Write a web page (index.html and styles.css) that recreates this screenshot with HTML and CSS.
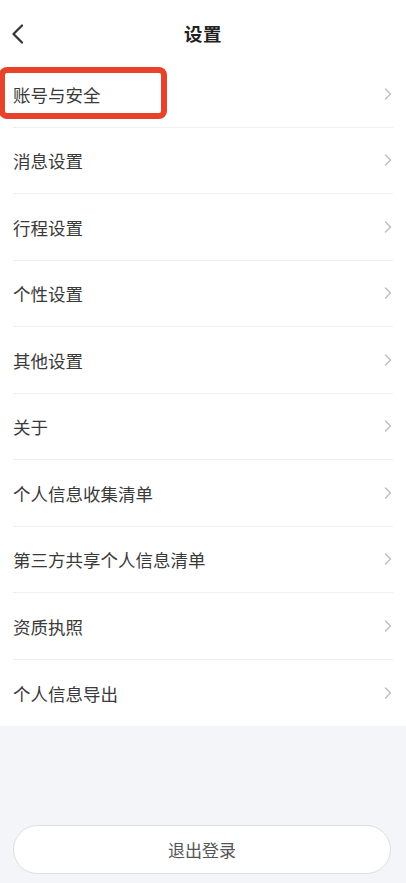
FILE: index.html
```html
<!DOCTYPE html>
<html lang="zh-CN">
<head>
<meta charset="utf-8">
<title>设置</title>
<link rel="stylesheet" href="styles.css">
</head>
<body>
<div class="page">
  <header class="topbar">
    <span class="back">
      <svg width="14" height="20" viewBox="0 0 14 20"><path d="M11 1.5 L2.5 10 L11 18.5" fill="none" stroke="#333" stroke-width="2.2" stroke-linecap="round" stroke-linejoin="round"/></svg>
    </span>
    <h1 class="title">设置</h1>
    <span class="spacer"></span>
  </header>
  <ul class="list">
    <li class="row"><span class="label">账号与安全</span><span class="chev"><svg width="8" height="12" viewBox="0 0 8 12"><path d="M1.5 1 L6.5 6 L1.5 11" fill="none" stroke="#bdbdbd" stroke-width="1.4" stroke-linecap="round" stroke-linejoin="round"/></svg></span></li>
    <li class="row"><span class="label">消息设置</span><span class="chev"><svg width="8" height="12" viewBox="0 0 8 12"><path d="M1.5 1 L6.5 6 L1.5 11" fill="none" stroke="#bdbdbd" stroke-width="1.4" stroke-linecap="round" stroke-linejoin="round"/></svg></span></li>
    <li class="row"><span class="label">行程设置</span><span class="chev"><svg width="8" height="12" viewBox="0 0 8 12"><path d="M1.5 1 L6.5 6 L1.5 11" fill="none" stroke="#bdbdbd" stroke-width="1.4" stroke-linecap="round" stroke-linejoin="round"/></svg></span></li>
    <li class="row"><span class="label">个性设置</span><span class="chev"><svg width="8" height="12" viewBox="0 0 8 12"><path d="M1.5 1 L6.5 6 L1.5 11" fill="none" stroke="#bdbdbd" stroke-width="1.4" stroke-linecap="round" stroke-linejoin="round"/></svg></span></li>
    <li class="row"><span class="label">其他设置</span><span class="chev"><svg width="8" height="12" viewBox="0 0 8 12"><path d="M1.5 1 L6.5 6 L1.5 11" fill="none" stroke="#bdbdbd" stroke-width="1.4" stroke-linecap="round" stroke-linejoin="round"/></svg></span></li>
    <li class="row"><span class="label">关于</span><span class="chev"><svg width="8" height="12" viewBox="0 0 8 12"><path d="M1.5 1 L6.5 6 L1.5 11" fill="none" stroke="#bdbdbd" stroke-width="1.4" stroke-linecap="round" stroke-linejoin="round"/></svg></span></li>
    <li class="row"><span class="label">个人信息收集清单</span><span class="chev"><svg width="8" height="12" viewBox="0 0 8 12"><path d="M1.5 1 L6.5 6 L1.5 11" fill="none" stroke="#bdbdbd" stroke-width="1.4" stroke-linecap="round" stroke-linejoin="round"/></svg></span></li>
    <li class="row"><span class="label">第三方共享个人信息清单</span><span class="chev"><svg width="8" height="12" viewBox="0 0 8 12"><path d="M1.5 1 L6.5 6 L1.5 11" fill="none" stroke="#bdbdbd" stroke-width="1.4" stroke-linecap="round" stroke-linejoin="round"/></svg></span></li>
    <li class="row"><span class="label">资质执照</span><span class="chev"><svg width="8" height="12" viewBox="0 0 8 12"><path d="M1.5 1 L6.5 6 L1.5 11" fill="none" stroke="#bdbdbd" stroke-width="1.4" stroke-linecap="round" stroke-linejoin="round"/></svg></span></li>
    <li class="row"><span class="label">个人信息导出</span><span class="chev"><svg width="8" height="12" viewBox="0 0 8 12"><path d="M1.5 1 L6.5 6 L1.5 11" fill="none" stroke="#bdbdbd" stroke-width="1.4" stroke-linecap="round" stroke-linejoin="round"/></svg></span></li>
  </ul>
  <div class="footer">
    <button class="logout">退出登录</button>
  </div>
  <div class="highlight"></div>
</div>
</body>
</html>
```

FILE: styles.css
```css
* { box-sizing: border-box; }
html, body {
  margin: 0;
  padding: 0;
  background: #f4f5f9;
}
body {
  font-family: "Noto Sans CJK SC", "Noto Sans", sans-serif;
  color: #333;
}
.page {
  position: relative;
  width: 406px;
  height: 883px;
  display: flex;
  flex-direction: column;
  overflow: hidden;
}
.topbar {
  height: 61px;
  background: #fff;
  display: grid;
  grid-template-columns: 60px 1fr 60px;
  align-items: center;
  padding-top: 6px;
}
.back {
  display: flex;
  align-items: center;
  padding-left: 11px;
}
.title {
  margin: 0;
  text-align: center;
  font-size: 18.5px;
  font-weight: 700;
  color: #222;
  letter-spacing: 0.5px;
  line-height: 1;
}
.list {
  list-style: none;
  margin: 0;
  padding: 0 13px;
  background: #fff;
}
.row {
  height: 66.5px;
  display: flex;
  align-items: center;
  justify-content: space-between;
  border-bottom: 1px solid #efefef;
}
.row:last-child { border-bottom: none; }
.label {
  font-size: 17.5px;
  color: #3a3a3a;
  line-height: 1;
  padding-top: 1px;
}
.chev {
  display: flex;
  align-items: center;
  margin-right: 1px;
}
.footer {
  flex: 1;
  padding: 99px 15px 0 13px;
}
.logout {
  width: 100%;
  height: 49px;
  border: 1px solid #dedede;
  border-radius: 25px;
  background: #fff;
  font-family: "Noto Sans CJK SC", "Noto Sans", sans-serif;
  font-size: 17px;
  color: #555;
  padding: 0;
}
.highlight {
  position: absolute;
  left: -1px;
  top: 67px;
  width: 168px;
  height: 52px;
  border: 6px solid #e8432a;
  border-radius: 8px;
  pointer-events: none;
}
```
